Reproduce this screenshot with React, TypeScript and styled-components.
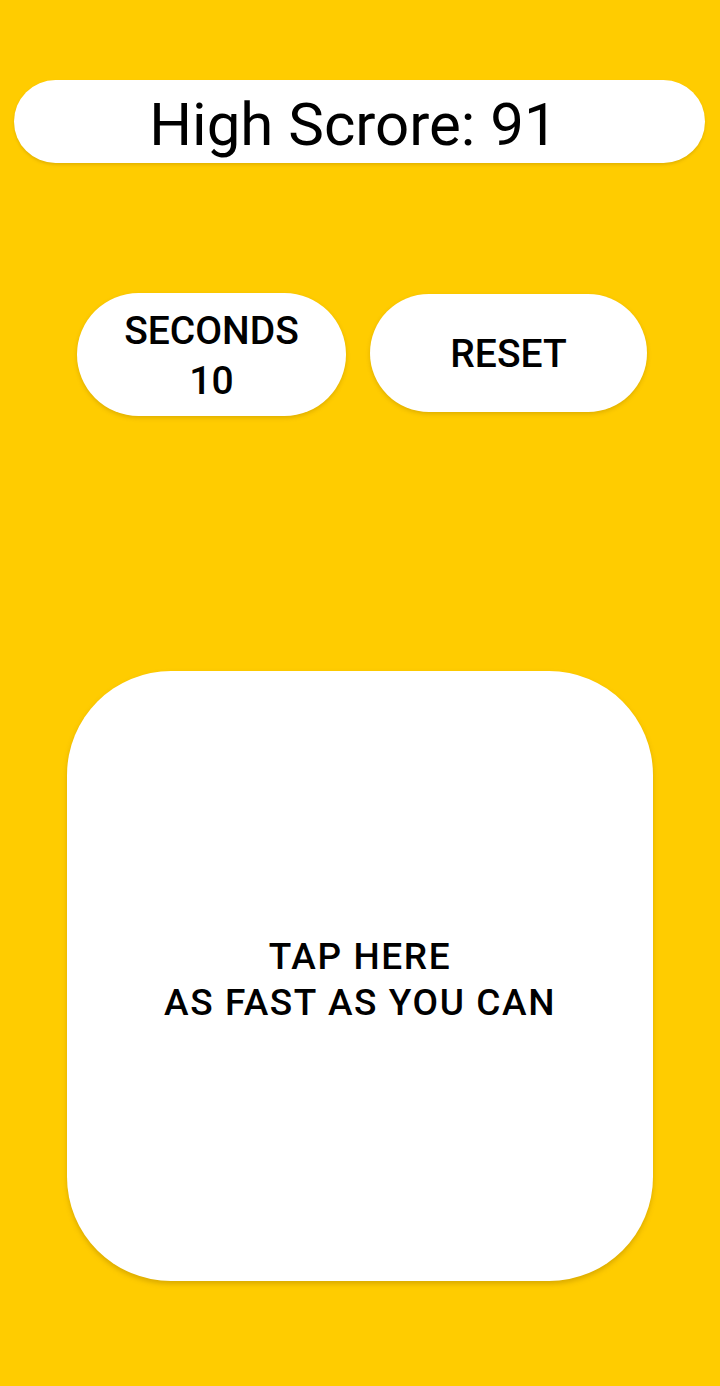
import React from "react";
import styled, { createGlobalStyle } from "styled-components";

const Global = createGlobalStyle`
  html, body { margin: 0; padding: 0; background: #FFCC00; }
  body { font-family: Roboto, "Noto Sans", sans-serif; color: #000; }
  * { box-sizing: border-box; }
`;

const Screen = styled.main`
  width: 720px;
  min-height: 1386px;
  background: #FFCC00;
  display: flex;
  flex-direction: column;
  align-items: center;
  padding-top: 80px;
`;

const ScoreBar = styled.div`
  width: 691px;
  height: 83px;
  margin-left: -1px;
  border-radius: 42px;
  background: #fff;
  display: flex;
  align-items: center;
  justify-content: center;
  font-size: 60px;
  font-weight: 400;
  padding-right: 12px;
  padding-top: 6px;
  box-shadow: 0 2px 3px rgba(150, 110, 0, 0.25);
`;

const ButtonRow = styled.div`
  margin-top: 130px;
  display: flex;
  align-items: flex-start;
  gap: 24px;
  margin-left: 4px;
`;

const PillButton = styled.button<{ $w: number; $h: number; $top: number }>`
  width: ${(p) => p.$w}px;
  height: ${(p) => p.$h}px;
  margin-top: ${(p) => p.$top}px;
  border: none;
  border-radius: 62px;
  background: #fff;
  font-family: Roboto, "Noto Sans", sans-serif;
  font-size: 39px;
  font-weight: 500;
  line-height: 50px;
  color: #000;
  display: flex;
  flex-direction: column;
  align-items: center;
  justify-content: center;
  box-shadow: 0 2px 4px rgba(150, 110, 0, 0.3);
  padding: 2px 0 0 0;
`;

const TapCard = styled.button`
  margin-top: 255px;
  width: 586px;
  height: 610px;
  border: none;
  border-radius: 104px;
  background: #fff;
  font-family: Roboto, "Noto Sans", sans-serif;
  font-size: 37px;
  font-weight: 500;
  letter-spacing: 1.6px;
  line-height: 46px;
  color: #000;
  display: flex;
  flex-direction: column;
  align-items: center;
  justify-content: center;
  padding: 8px 0 0 0;
  box-shadow: 0 3px 5px rgba(150, 110, 0, 0.35);
`;

export default function App() {
  return (
    <>
      <Global />
      <Screen>
        <ScoreBar>High Scrore: 91</ScoreBar>
        <ButtonRow>
          <PillButton $w={269} $h={123} $top={0}>
            <span>SECONDS</span>
            <span>10</span>
          </PillButton>
          <PillButton $w={277} $h={118} $top={1}>
            <span>RESET</span>
          </PillButton>
        </ButtonRow>
        <TapCard>
          <span>TAP HERE</span>
          <span>AS FAST AS YOU CAN</span>
        </TapCard>
      </Screen>
    </>
  );
}
